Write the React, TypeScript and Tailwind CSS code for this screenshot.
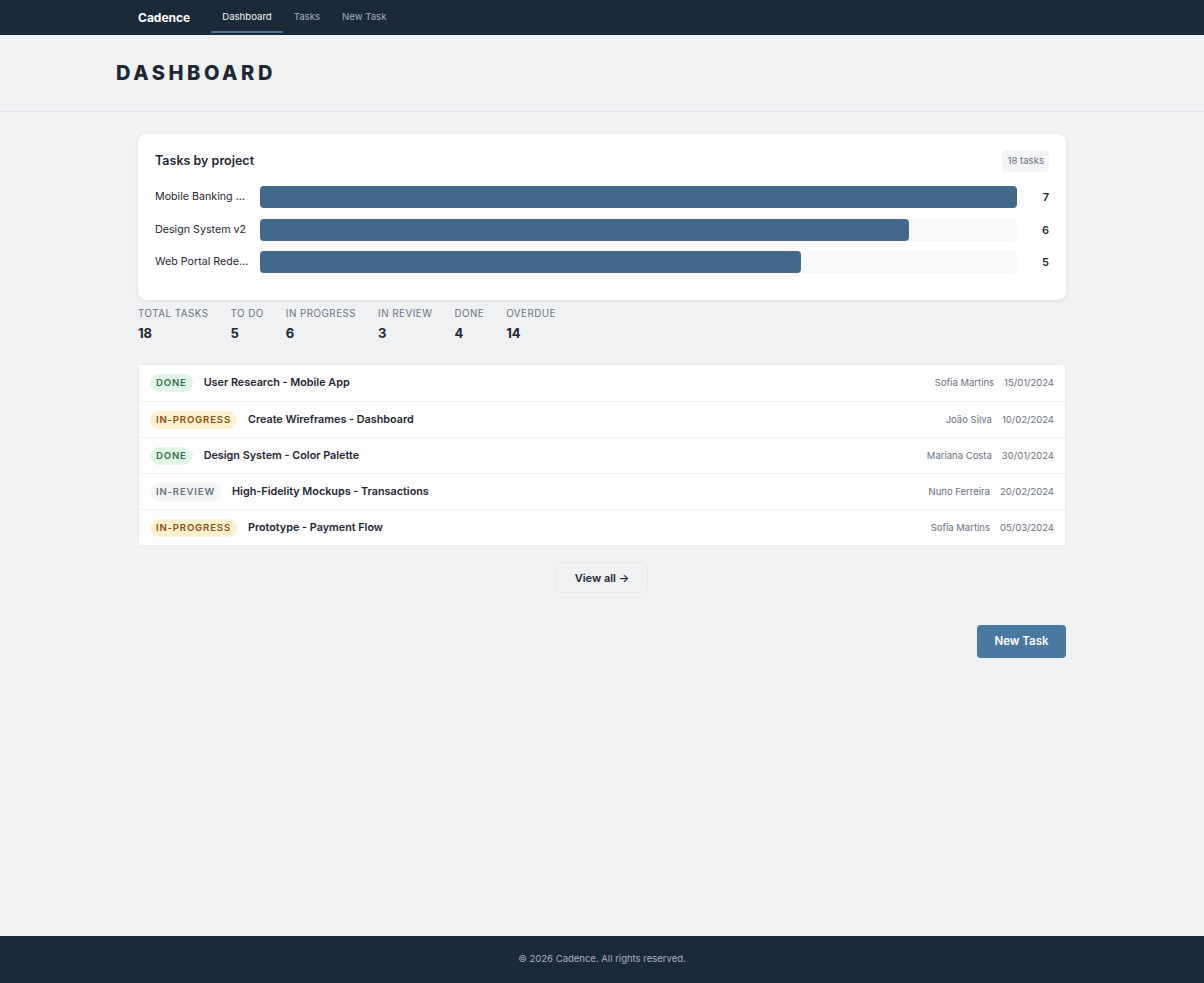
import React from 'react';

const projects = [
  { name: 'Mobile Banking App', count: 7 },
  { name: 'Design System v2', count: 6 },
  { name: 'Web Portal Redesign', count: 5 },
];

const stats = [
  { label: 'Total tasks', value: 18 },
  { label: 'To do', value: 5 },
  { label: 'In progress', value: 6 },
  { label: 'In review', value: 3 },
  { label: 'Done', value: 4 },
  { label: 'Overdue', value: 14 },
];

type Status = 'done' | 'in-progress' | 'in-review';

const tasks: { status: Status; title: string; owner: string; date: string }[] = [
  { status: 'done', title: 'User Research - Mobile App', owner: 'Sofia Martins', date: '15/01/2024' },
  { status: 'in-progress', title: 'Create Wireframes - Dashboard', owner: 'João Silva', date: '10/02/2024' },
  { status: 'done', title: 'Design System - Color Palette', owner: 'Mariana Costa', date: '30/01/2024' },
  { status: 'in-review', title: 'High-Fidelity Mockups - Transactions', owner: 'Nuno Ferreira', date: '20/02/2024' },
  { status: 'in-progress', title: 'Prototype - Payment Flow', owner: 'Sofia Martins', date: '05/03/2024' },
];

const badgeStyles: Record<Status, string> = {
  done: 'bg-[#e3f5e9] text-[#2e7148]',
  'in-progress': 'bg-[#fcf1cf] text-[#85520f]',
  'in-review': 'bg-[#f3f4f6] text-[#6b7280]',
};

function StatusBadge({ status }: { status: Status }) {
  return (
    <span
      className={`inline-flex h-[18px] items-center rounded-full px-[6px] text-[9.6px] font-semibold uppercase tracking-[0.085em] ${badgeStyles[status]}`}
    >
      {status}
    </span>
  );
}

export default function App() {
  const max = Math.max(...projects.map((p) => p.count));

  return (
    <div
      className="flex min-h-screen flex-col bg-[#eff1f3] text-[#1f2937]"
      style={{ fontFamily: 'Inter, "Noto Sans", sans-serif' }}
    >
      <nav className="h-[35px] bg-[#1b2a38]">
        <div className="mx-auto flex h-full w-[928px] items-center">
          <span className="mr-[21px] text-[12px] font-bold text-white">Cadence</span>
          <a className="relative flex h-full items-center px-[11px] pb-[1px] text-[9.6px] text-[#f1f5f9]">
            Dashboard
            <span className="absolute bottom-[2px] left-0 right-0 h-[2px] rounded-full bg-[#4a7396]" />
          </a>
          <a className="flex h-full items-center px-[11px] pb-[1px] text-[9.6px] text-[#a3b1be]">Tasks</a>
          <a className="flex h-full items-center px-[11px] pb-[1px] text-[9.6px] text-[#a3b1be]">New Task</a>
        </div>
      </nav>

      <header className="border-b border-[#e2e5e9]">
        <div className="mx-auto flex h-[76px] w-[972px] items-center">
          <h1 className="text-[20px] font-extrabold uppercase tracking-[0.18em] text-[#1f2733]">Dashboard</h1>
        </div>
      </header>

      <main className="mx-auto w-[928px] flex-1 pt-[22px]">
        <section className="rounded-[8px] bg-white px-[17px] pb-[27px] pt-[16px] shadow-[0_1px_4px_rgba(15,23,42,0.1)]">
          <div className="flex items-center justify-between">
            <h2 className="text-[12.5px] font-semibold text-[#1f2733]">Tasks by project</h2>
            <span className="rounded-[4px] bg-[#f4f5f7] px-[5px] py-[4px] text-[9.6px] text-[#6b7280]">18 tasks</span>
          </div>
          <div className="mt-[14px] flex flex-col gap-[10.5px]">
            {projects.map((p) => (
              <div key={p.name} className="flex items-center">
                <span className="w-[94px] truncate text-[10.7px] text-[#1f2733]">{p.name}</span>
                <div className="ml-[11px] h-[22px] flex-1 rounded-[4px] bg-[#f6f8f9]">
                  <div
                    className="h-full rounded-[4px] bg-[#446a8b]"
                    style={{ width: `${(p.count / max) * 100}%` }}
                  />
                </div>
                <span className="w-[32px] text-right text-[11px] font-semibold text-[#1f2733]">{p.count}</span>
              </div>
            ))}
          </div>
        </section>

        <div className="mt-[7px] flex gap-[22px]">
          {stats.map((s) => (
            <div key={s.label} className="flex flex-col">
              <span className="text-[9.8px] uppercase leading-[14px] tracking-[0.05em] text-[#6b7280]">{s.label}</span>
              <span className="mt-[2px] text-[13px] font-bold leading-[20px] text-[#1f2733]">{s.value}</span>
            </div>
          ))}
        </div>

        <ul className="mt-[21px] rounded-[4px] border border-[#e8ebee] bg-white">
          {tasks.map((t, i) => (
            <li
              key={i}
              className={`flex h-[36px] items-center bg-[#fdfdfd] px-[11px] ${i > 0 ? 'border-t border-[#eef0f2]' : ''}`}
            >
              <StatusBadge status={t.status} />
              <span className="ml-[11px] text-[10.8px] font-semibold text-[#1f2733]">{t.title}</span>
              <span className="ml-auto text-[9.5px] text-[#6b7280]">{t.owner}</span>
              <span className="ml-[10px] text-[9.5px] text-[#6b7280]">{t.date}</span>
            </li>
          ))}
        </ul>

        <div className="mt-[16px] flex justify-center">
          <button className="h-[31px] w-[92px] rounded-[6px] border border-[#e6e8eb] bg-[#eff1f3] text-[11px] font-semibold text-[#1f2733]">
            View all →
          </button>
        </div>

        <div className="mt-[32px] flex justify-end">
          <button className="h-[33px] w-[89px] rounded-[4px] bg-[#4a79a0] text-[11.5px] font-semibold text-white">
            New Task
          </button>
        </div>
      </main>

      <footer className="flex h-[47px] items-center justify-center bg-[#1b2a38]">
        <span className="text-[9.5px] text-[#a9b4bf]">© 2026 Cadence. All rights reserved.</span>
      </footer>
    </div>
  );
}
